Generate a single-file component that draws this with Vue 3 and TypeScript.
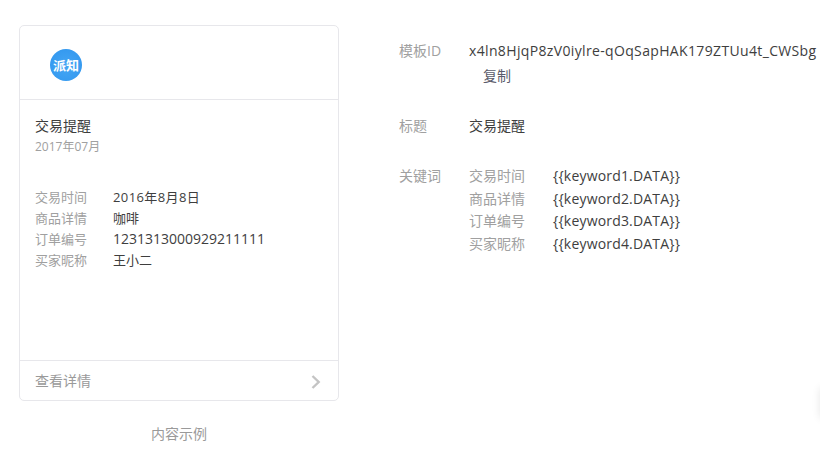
<script setup lang="ts">
const rows = [
  { k: '交易时间', v: '2016年8月8日', t: '{{keyword1.DATA}}', c: 'date-v' },
  { k: '商品详情', v: '咖啡', t: '{{keyword2.DATA}}', c: '' },
  { k: '订单编号', v: '1231313000929211111', t: '{{keyword3.DATA}}', c: 'num-v' },
  { k: '买家昵称', v: '王小二', t: '{{keyword4.DATA}}', c: '' },
]
</script>

<template>
  <div class="page">
    <div class="left">
      <div class="card">
        <div class="head">
          <div class="logo">派知</div>
        </div>
        <div class="body">
          <div class="title">交易提醒</div>
          <div class="date">2017年07月</div>
          <div class="rows">
            <div v-for="r in rows" :key="r.k" class="row">
              <span class="rk">{{ r.k }}</span>
              <span class="rv" :class="r.c">{{ r.v }}</span>
            </div>
          </div>
        </div>
        <div class="foot">
          <span class="more">查看详情</span>
          <svg class="chev" width="10" height="14" viewBox="0 0 10 14"><path d="M1.5 1 L7.7 7 L1.5 13" fill="none" stroke="#c4c4c4" stroke-width="2.4" /></svg>
        </div>
      </div>
      <div class="caption">内容示例</div>
    </div>
    <div class="right">
      <div class="item id">
        <div class="label">模板ID</div>
        <div class="val">
          <div class="idv">x4ln8HjqP8zV0iylre-qOqSapHAK179ZTUu4t_CWSbg</div>
          <div class="copy">复制</div>
        </div>
      </div>
      <div class="item ttl">
        <div class="label">标题</div>
        <div class="val">交易提醒</div>
      </div>
      <div class="item">
        <div class="label">关键词</div>
        <div class="kws">
          <div v-for="r in rows" :key="r.t" class="kw">
            <span class="kk">{{ r.k }}</span>
            <span class="kt">{{ r.t }}</span>
          </div>
        </div>
      </div>
    </div>
    <div class="edge"></div>
  </div>
</template>

<style>
html, body { margin: 0; background: #fff; overflow: hidden; }
</style>

<style scoped>
.page {
  position: relative;
  width: 820px;
  height: 455px;
  overflow: hidden;
  display: flex;
  box-sizing: border-box;
  padding: 25px 0 0 19px;
  font-family: "Open Sans", "Noto Sans CJK SC", sans-serif;
  font-size: 14px;
  color: #3e3e3e;
  background: #fff;
}
.left { width: 320px; flex: none; }
.card {
  box-sizing: border-box;
  width: 320px;
  height: 376px;
  border: 1px solid #e7e7eb;
  border-radius: 5px;
  display: flex;
  flex-direction: column;
}
.head {
  height: 74px;
  flex: none;
  box-sizing: border-box;
  border-bottom: 1px solid #e7e7eb;
  padding: 23px 0 0 30px;
}
.logo {
  width: 32px;
  height: 32px;
  border-radius: 50%;
  background: radial-gradient(circle at 50% 55%, #45a6f4, #2f95ee);
  color: #fff;
  font-size: 13px;
  font-weight: 700;
  line-height: 32px;
  text-align: center;
}
.body { flex: 1; padding: 15px 15px 0; }
.title { line-height: 22px; color: #3e3e3e; }
.date { font-size: 12px; line-height: 18px; color: #a0a0a0; margin-top: 1px; }
.rows { margin-top: 31.4px; }
.row { display: flex; height: 20.8px; line-height: 21px; }
.rk { width: 78px; flex: none; color: #a0a0a0; font-size: 13px; }
.rv { color: #3e3e3e; font-size: 13px; }
.date-v { letter-spacing: .4px; }
.num-v { font-size: 14px; line-height: 19px; }
.foot {
  height: 40px;
  flex: none;
  box-sizing: border-box;
  border-top: 1px solid #e7e7eb;
  padding: 0 17px 0 15px;
  display: flex;
  align-items: center;
  justify-content: space-between;
  color: #9a9a9a;
}
.more { margin-bottom: 2px; }
.chev { margin-top: 2px; }
.caption {
  margin-top: 23px;
  text-align: center;
  color: #9a9a9a;
  line-height: 20px;
}
.right { margin-left: 60px; padding-top: 15px; flex: none; }
.item { display: flex; line-height: 21px; }
.label { width: 70px; flex: none; color: #a0a0a0; }
.val { color: #3e3e3e; white-space: nowrap; }
.idv { letter-spacing: .35px; }
.copy { margin: 4px 0 0 14px; color: #5b5b6b; }
.ttl { margin-top: 29px; }
.item:last-child { margin-top: 29px; }
.kw { display: flex; height: 22.6px; line-height: 22.6px; }
.kk { width: 84px; color: #a0a0a0; flex: none; }
.kt { color: #3e3e3e; letter-spacing: .18px; }
.edge {
  position: absolute;
  right: -8px;
  top: 388px;
  width: 8px;
  height: 30px;
  box-shadow: 0 0 8px rgba(0, 0, 0, .1);
}
</style>
